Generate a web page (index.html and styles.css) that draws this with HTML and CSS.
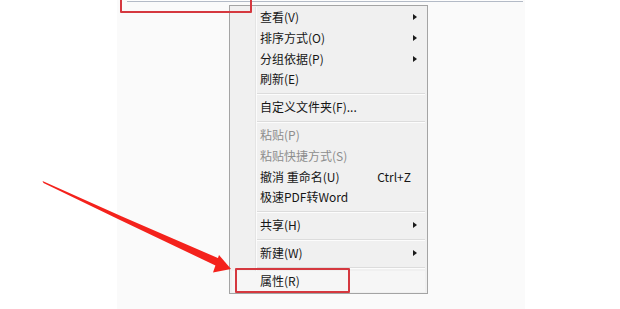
FILE: index.html
```html
<!DOCTYPE html>
<html lang="zh-CN">
<head>
<meta charset="utf-8">
<title>右键菜单</title>
<link rel="stylesheet" href="styles.css">
</head>
<body>
<div class="stage">
  <div class="topbar"></div>

  <div class="menu">
    <div class="gutter"></div>
    <div class="item"><span class="label">查看(V)</span><span class="sub"></span></div>
    <div class="item"><span class="label">排序方式(O)</span><span class="sub"></span></div>
    <div class="item"><span class="label">分组依据(P)</span><span class="sub"></span></div>
    <div class="item"><span class="label">刷新(E)</span></div>
    <div class="sep"></div>
    <div class="item"><span class="label">自定义文件夹(F)...</span></div>
    <div class="sep"></div>
    <div class="item disabled"><span class="label">粘贴(P)</span></div>
    <div class="item disabled"><span class="label">粘贴快捷方式(S)</span></div>
    <div class="item"><span class="label">撤消 重命名(U)</span><span class="key">Ctrl+Z</span></div>
    <div class="item"><span class="label">极速PDF转Word</span></div>
    <div class="sep"></div>
    <div class="item"><span class="label">共享(H)</span><span class="sub"></span></div>
    <div class="sep"></div>
    <div class="item"><span class="label">新建(W)</span><span class="sub"></span></div>
    <div class="sep"></div>
    <div class="item hover"><span class="label">属性(R)</span></div>
  </div>

  <div class="mark mark-top"></div>
  <div class="mark mark-prop"></div>
</div>

<svg class="arrow" width="620" height="309" viewBox="0 0 620 309">
  <polygon points="42.5,181 43.5,183 120,220 216.5,266 219,258.5 122,216.5" fill="#f4221c"/>
  <polygon points="231,269 219,255 213,272.5" fill="#f4221c"/>
</svg>
</body>
</html>
```

FILE: styles.css
```css
html, body {
  margin: 0;
  padding: 0;
  background: #ffffff;
  width: 620px;
  height: 309px;
  overflow: hidden;
}

body {
  font-family: "Noto Sans CJK SC", "Noto Sans", sans-serif;
  font-size: 12px;
  color: #161616;
  position: relative;
}

.stage {
  position: relative;
  margin-left: 117px;
  width: 408px;
  height: 309px;
  background: #fafafa;
}

.topbar {
  margin-left: 10px;
  width: 396px;
  height: 1px;
  border-bottom: 1px solid #b3bac6;
  background: #fdfdfd;
}

.menu {
  position: absolute;
  left: 112px;
  top: 5px;
  width: 197px;
  height: 286px;
  background: #f0f0f0;
  border: 1px solid #a4a4a4;
  padding-top: 1px;
  box-sizing: content-box;
}

.gutter {
  position: absolute;
  left: 25px;
  top: 1px;
  bottom: 1px;
  width: 1px;
  background: #e4e4e4;
  border-right: 1px solid #fbfbfb;
}

.item {
  position: relative;
  display: flex;
  align-items: center;
  height: 20.67px;
  padding-left: 30px;
  padding-right: 10px;
  line-height: 1;
  white-space: nowrap;
}

.item .label {
  flex: 1;
}

.item.disabled {
  color: #8d8d8d;
}

.item.hover {
  background: #f6f6f6;
  margin: 0 2px;
  padding-left: 28px;
}

.key {
  margin-right: 6px;
}

.sub {
  width: 0;
  height: 0;
  border-top: 3.5px solid transparent;
  border-bottom: 3.5px solid transparent;
  border-left: 4px solid #1a1a1a;
  margin-right: 0;
}

.sep {
  position: relative;
  height: 7.33px;
}

.sep::before {
  content: "";
  position: absolute;
  left: 27px;
  right: 2px;
  top: 3px;
  height: 1px;
  background: #dcdcdc;
  border-bottom: 1px solid #fcfcfc;
}

.mark {
  position: absolute;
  border: 2px solid #d5383f;
  border-radius: 1px;
  box-sizing: border-box;
}

.mark-top {
  left: 3px;
  top: -3px;
  width: 132px;
  height: 16px;
}

.mark-prop {
  left: 118px;
  top: 268px;
  width: 115px;
  height: 25px;
}

.arrow {
  position: absolute;
  left: 0;
  top: 0;
  pointer-events: none;
}
```
